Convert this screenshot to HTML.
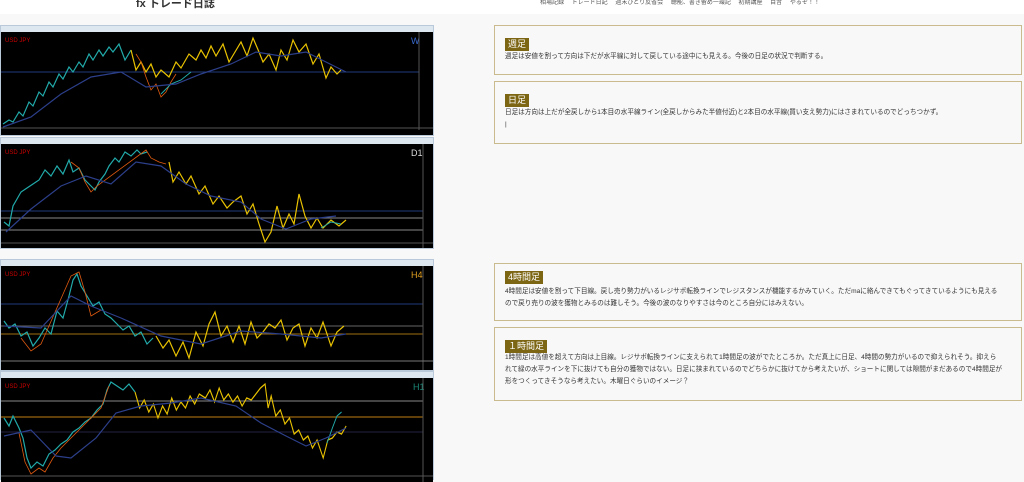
<!DOCTYPE html>
<html><head><meta charset="utf-8"><style>
*{margin:0;padding:0;box-sizing:border-box}
body{width:1024px;height:480px;overflow:hidden;background:#f8f8f8;font-family:"Liberation Sans","Noto Sans CJK JP",sans-serif;position:relative}
.hdr{position:absolute;left:0;top:0;width:1024px;height:14px;background:#fff}
.logo{position:absolute;left:136px;top:-5px;font-size:11px;font-weight:bold;color:#333}
.nav{position:absolute;left:540px;top:-3px;font-size:6px;color:#555;word-spacing:6px}
.win{position:absolute;left:0;width:434px;background:#dfe8f1;border:1px solid #b9c9d9}
.win .t{height:6px;background:#dde7f0}
.win svg{display:block}
.box{position:absolute;left:494px;width:528px;border:1px solid #c9bb8e;background:#f8f8f8}
.bd{position:absolute;left:10px;background:#7c6513;color:#fff;font-size:9px;line-height:13px;padding:0 3px}
.tx{position:absolute;left:10px;font-size:6.6px;color:#333;line-height:12px;width:497px}
</style></head><body>
<div class="hdr"><div class="logo">fx トレード日誌</div><div class="nav">相場記録 トレード日記 週末ひとり反省会 聴能、書き留め一環記 初期講座 目音 やるぞ！！</div></div>

<div class="win" style="top:25px;height:111px"><div class="t"></div>
<svg width="432" height="103" viewBox="0 0 432 103"><rect width="432" height="103" fill="#000"/>
<text x="4" y="10" fill="#c00" font-size="6">USD JPY</text><text x="410" y="12" fill="#3a6ad0" font-size="9">W</text>
<line x1="0" y1="40" x2="418" y2="40" stroke="#223a7a"/><line x1="418" y1="0" x2="418" y2="98" stroke="#555"/><line x1="0" y1="96" x2="432" y2="96" stroke="#555"/>
<polyline fill="none" stroke="#2aa" stroke-width="1.2" points="2,92 8,88 12,90 18,80 22,84 28,70 32,74 38,60 42,64 48,50 52,55 58,42 62,47 68,35 72,40 78,30 82,35 88,22 92,28 98,18 102,24 108,15 112,20 118,12 124,28 130,18"/>
<polyline fill="none" stroke="#e9c200" stroke-width="1.2" points="130,18 135,38 140,30 145,40 150,32 155,45 160,38 168,45 175,30 180,36 188,22 195,28 200,18 205,26 210,14 215,24 222,12 228,30 234,20 240,10 246,24 252,6 258,20 262,30 268,22 275,38 280,18 286,28 292,8 298,20 305,12 312,32 318,22 325,46 330,35 336,42 340,38"/>
<polyline fill="none" stroke="#e05a10" stroke-width="0.8" points="135,22 140,30 145,45 150,58 155,52 160,65 165,60 170,50 175,42"/>
<polyline fill="none" stroke="#2aa" stroke-width="1" points="160,62 170,52 180,48 190,40"/>
<polyline fill="none" stroke="#2c3f8a" stroke-width="1.2" points="2,95 30,85 60,62 90,45 120,40 145,55 175,52 200,42 230,32 255,20 280,24 305,20 325,30 345,40"/>
</svg></div>

<div class="win" style="top:137px;height:112px"><div class="t"></div>
<svg width="432" height="104" viewBox="0 0 432 104"><rect width="432" height="104" fill="#000"/>
<text x="4" y="10" fill="#c00" font-size="6">USD JPY</text><text x="410" y="12" fill="#ddd" font-size="9">D1</text>
<line x1="0" y1="67" x2="422" y2="67" stroke="#223a7a"/><line x1="0" y1="74" x2="422" y2="74" stroke="#888"/><line x1="0" y1="86" x2="422" y2="86" stroke="#888"/>
<line x1="422" y1="0" x2="422" y2="104" stroke="#555"/><line x1="0" y1="99" x2="432" y2="99" stroke="#555"/>
<polyline fill="none" stroke="#2aa" stroke-width="1.2" points="3,78 8,82 12,62 16,55 20,48 26,44 32,40 38,36 44,26 50,32 56,22 62,30 68,16 72,28 78,24 84,36 88,40 94,46 98,38 104,30 108,22 114,14 118,18 124,8 130,12 136,6 140,10 146,8"/>
<polyline fill="none" stroke="#e05a10" stroke-width="0.8" points="70,18 78,24 84,38 90,48 96,42 145,6 150,14 158,18 165,20"/>
<polyline fill="none" stroke="#e9c200" stroke-width="1.2" points="168,18 172,38 178,28 185,40 190,32 198,50 204,42 212,60 218,52 226,64 232,58 240,52 246,70 252,60 258,80 264,98 270,88 276,62 282,84 288,70 293,80 298,50 304,72 310,84 316,74 322,84 330,76 338,82 345,76"/>
<polyline fill="none" stroke="#2aa" stroke-width="1" points="320,84 330,78 340,80"/>
<polyline fill="none" stroke="#2c3f8a" stroke-width="1.2" points="5,88 30,65 60,42 85,32 110,40 135,18 160,22 185,40 210,52 240,58 260,75 285,85 310,75 335,72"/>
</svg></div>

<div class="win" style="top:259px;height:112px"><div class="t"></div>
<svg width="432" height="104" viewBox="0 0 432 104"><rect width="432" height="104" fill="#000"/>
<text x="4" y="10" fill="#c00" font-size="6">USD JPY</text><text x="410" y="12" fill="#e0a020" font-size="9">H4</text>
<line x1="0" y1="38" x2="422" y2="38" stroke="#223a7a"/><line x1="0" y1="60" x2="422" y2="60" stroke="#666"/><line x1="0" y1="68" x2="422" y2="68" stroke="#a07010"/>
<line x1="422" y1="0" x2="422" y2="104" stroke="#555"/><line x1="0" y1="95" x2="432" y2="95" stroke="#777"/>
<polyline fill="none" stroke="#2aa" stroke-width="1.2" points="3,55 8,62 14,58 20,70 26,66 32,80 38,72 44,62 50,68 56,45 62,52 68,30 72,14 76,8 80,20 86,30 92,40 98,36 104,48 110,52 116,58 122,64 128,60 134,70 140,66 146,78 152,72"/>
<polyline fill="none" stroke="#e05a10" stroke-width="0.8" points="20,72 30,85 40,78 70,10 78,6 84,26 90,50 100,44"/>
<polyline fill="none" stroke="#e9c200" stroke-width="1.2" points="155,70 162,82 168,74 175,90 182,76 188,92 195,66 202,80 208,58 214,46 220,70 226,60 232,76 238,60 244,78 250,56 256,72 262,66 268,58 274,62 280,54 286,74 292,62 298,58 304,80 310,62 316,72 322,56 330,80 336,66 343,60"/>
<polyline fill="none" stroke="#2c3f8a" stroke-width="1.2" points="3,60 40,62 70,30 90,40 120,52 160,70 200,78 240,65 280,68 320,72 345,68"/>
</svg></div>

<div class="win" style="top:371px;height:109px"><div class="t"></div>
<svg width="432" height="104" viewBox="0 0 432 104"><rect width="432" height="104" fill="#000"/>
<text x="4" y="10" fill="#c00" font-size="6">USD JPY</text><text x="412" y="12" fill="#1a8a7a" font-size="9">H1</text>
<line x1="0" y1="23" x2="422" y2="23" stroke="#888"/><line x1="0" y1="39" x2="422" y2="39" stroke="#c08010"/><line x1="0" y1="54" x2="422" y2="54" stroke="#224"/>
<line x1="422" y1="0" x2="422" y2="104" stroke="#555"/><line x1="0" y1="98" x2="432" y2="98" stroke="#555"/>
<polyline fill="none" stroke="#2aa" stroke-width="1.2" points="3,40 8,48 12,38 18,50 22,60 26,80 30,90 36,84 42,88 48,76 54,72 60,66 66,62 72,54 78,50 84,44 90,40 96,32 102,26 106,12 110,4 116,8 122,12 128,6 134,14"/>
<polyline fill="none" stroke="#e05a10" stroke-width="0.8" points="18,55 24,84 30,96 38,90 44,94 52,80 60,70 100,30 108,8"/>
<g transform="translate(31.5,0) scale(0.765,1)">
<polyline fill="none" stroke="#e9c200" stroke-width="1.4" points="134,14 140,30 146,22 152,34 158,26 164,40 170,28 176,36 182,20 188,32 194,24 200,30 206,18 212,26 218,16 226,20 232,12 238,24 244,10 250,22 256,16 262,24 268,18 274,28 280,20 286,22 292,16 298,10 304,6 308,30 312,18 318,38 324,32 330,46 336,40 342,56 348,52 354,62 360,58 366,70 372,62 380,80 386,62 392,60 398,54 404,56 410,48"/>
<polyline fill="none" stroke="#2aa" stroke-width="1.2" points="385,65 392,50 398,38 404,34"/>
</g>
<polyline fill="none" stroke="#2c3f8a" stroke-width="1.2" points="3,58 30,52 55,78 70,80 95,60 115,35 140,28 170,25 200,20 235,28 260,45 285,58 305,68 325,60 345,50"/>
</svg></div>

<div class="box" style="top:25px;height:50px"><div class="bd" style="top:12px">週足</div><div class="tx" style="top:25px">週足は安値を割って方向は下だが水平線に対して戻している途中にも見える。今後の日足の状況で判断する。</div></div>
<div class="box" style="top:81px;height:63px"><div class="bd" style="top:12px">日足</div><div class="tx" style="top:25px">日足は方向は上だが全戻しから1本目の水平線ライン(全戻しからみた半値付近)と2本目の水平線(買い支え勢力)にはさまれているのでどっちつかず。<br>|</div></div>
<div class="box" style="top:263px;height:58px"><div class="bd" style="top:7px">4時間足</div><div class="tx" style="top:22px">4時間足は安値を割って下目線。戻し売り勢力がいるレジサポ転換ラインでレジスタンスが機能するかみていく。ただmaに絡んできてもぐってきているようにも見えるので戻り売りの波を獲物とみるのは難しそう。今後の波のなりやすさは今のところ自分にはみえない。</div></div>
<div class="box" style="top:327px;height:74px"><div class="bd" style="top:12px">１時間足</div><div class="tx" style="top:24px">1時間足は高値を超えて方向は上目線。レジサポ転換ラインに支えられて1時間足の波がでたところか。ただ真上に日足、4時間の勢力がいるので抑えられそう。抑えられて緑の水平ラインを下に抜けても自分の獲物ではない。日足に挟まれているのでどちらかに抜けてから考えたいが、ショートに関しては隙間がまだあるので4時間足が形をつくってきそうなら考えたい。木曜日ぐらいのイメージ？</div></div>
</body></html>
